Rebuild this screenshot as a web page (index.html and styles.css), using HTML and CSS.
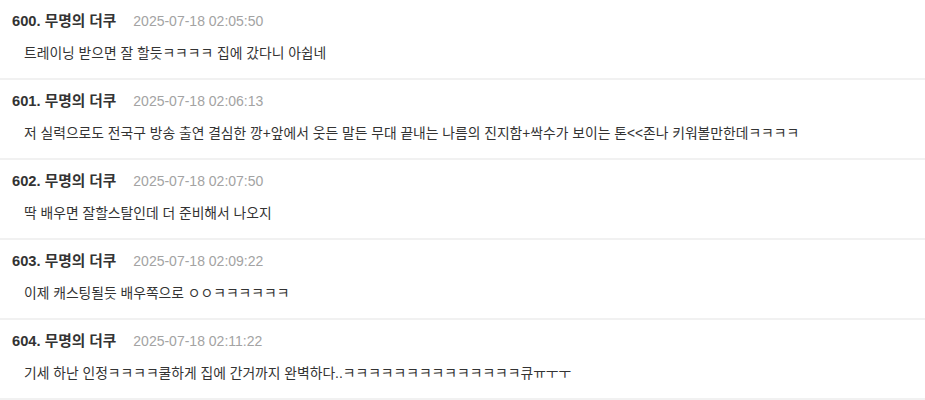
FILE: index.html
```html
<!DOCTYPE html>
<html lang="ko">
<head>
<meta charset="utf-8">
<link rel="stylesheet" href="styles.css">
</head>
<body>
<ul class="comments">
  <li class="comment">
    <div class="meta"><span class="author">600. 무명의 더쿠</span><span class="date">2025-07-18 02:05:50</span></div>
    <p class="text">트레이닝 받으면 잘 할듯ㅋㅋㅋㅋ 집에 갔다니 아쉽네</p>
  </li>
  <li class="comment">
    <div class="meta"><span class="author">601. 무명의 더쿠</span><span class="date">2025-07-18 02:06:13</span></div>
    <p class="text">저 실력으로도 전국구 방송 출연 결심한 깡+앞에서 웃든 말든 무대 끝내는 나름의 진지함+싹수가 보이는 톤&lt;&lt;존나 키워볼만한데ㅋㅋㅋㅋ</p>
  </li>
  <li class="comment">
    <div class="meta"><span class="author">602. 무명의 더쿠</span><span class="date">2025-07-18 02:07:50</span></div>
    <p class="text">딱 배우면 잘할스탈인데 더 준비해서 나오지</p>
  </li>
  <li class="comment">
    <div class="meta"><span class="author">603. 무명의 더쿠</span><span class="date">2025-07-18 02:09:22</span></div>
    <p class="text">이제 캐스팅될듯 배우쪽으로 ㅇㅇㅋㅋㅋㅋㅋㅋ</p>
  </li>
  <li class="comment">
    <div class="meta"><span class="author">604. 무명의 더쿠</span><span class="date">2025-07-18 02:11:22</span></div>
    <p class="text">기세 하난 인정ㅋㅋㅋㅋ쿨하게 집에 간거까지 완벽하다..ㅋㅋㅋㅋㅋㅋㅋㅋㅋㅋㅋㅋㅋㅋ큐ㅠㅜㅜ</p>
  </li>
</ul>
</body>
</html>
```

FILE: styles.css
```css
html, body {
  margin: 0;
  padding: 0;
  background: #fff;
}
body {
  font-family: "Liberation Sans", "Noto Sans CJK KR", sans-serif;
  color: #333;
}
.comments {
  list-style: none;
  margin: 0;
  padding: 0;
}
.comment {
  padding: 11px 12px 14px;
  border-bottom: 2px solid #f1f1f1;
}
.meta {
  display: flex;
  align-items: center;
  gap: 17px;
  height: 20px;
  line-height: 20px;
}
.author {
  font-size: 14.7px;
  font-weight: bold;
  color: #333;
}
.date {
  font-size: 14px;
  color: #a3a3a3;
}
.text {
  margin: 13px 0 0;
  padding-left: 12px;
  font-size: 13.8px;
  line-height: 20px;
  color: #333;
}
```
